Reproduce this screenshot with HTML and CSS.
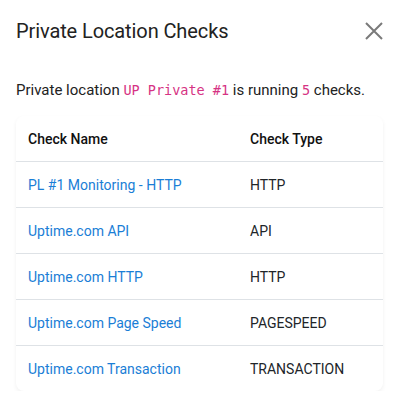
FILE: index.html
```html
<!DOCTYPE html>
<html lang="en">
<head>
  <meta charset="UTF-8" />
  <title>Private Location Checks</title>
  <link rel="stylesheet" href="styles.css">
</head>
<body>
  <div class="modal">
    <div class="modal-header">
      <h2>Private Location Checks</h2>
      <button class="close" aria-label="Close">
        <svg width="18" height="18" viewBox="0 0 18 18">
          <path d="M1 1 L17 17 M17 1 L1 17" stroke="#7a7a7a" stroke-width="2" fill="none"/>
        </svg>
      </button>
    </div>
    <p class="intro">Private location <code>UP Private #1</code> is running <code>5</code> checks.</p>

    <div class="card">
      <table>
        <thead>
          <tr>
            <th>Check Name</th>
            <th>Check Type</th>
          </tr>
        </thead>
        <tbody>
          <tr><td><a href="#">PL #1 Monitoring - HTTP</a></td><td>HTTP</td></tr>
          <tr><td><a href="#">Uptime.com API</a></td><td>API</td></tr>
          <tr><td><a href="#">Uptime.com HTTP</a></td><td>HTTP</td></tr>
          <tr><td><a href="#">Uptime.com Page Speed</a></td><td>PAGESPEED</td></tr>
          <tr><td><a href="#">Uptime.com Transaction</a></td><td>TRANSACTION</td></tr>
        </tbody>
      </table>
    </div>
  </div>
</body>
</html>
```

FILE: styles.css
```css
html, body {
  margin: 0;
  padding: 0;
  background: #fff;
  font-family: 'Roboto', 'Liberation Sans', sans-serif;
  color: #212529;
}

.modal {
  padding: 16px 13px 0 16px;
}

.modal-header {
  display: flex;
  justify-content: space-between;
  align-items: center;
  height: 30px;
}

.modal-header h2 {
  margin: 0;
  font-size: 20px;
  font-weight: 400;
  color: #222;
  letter-spacing: -0.1px;
}

.close {
  background: none;
  border: 0;
  padding: 0;
  width: 18px;
  height: 18px;
  cursor: pointer;
}

.intro {
  margin: 34px 0 16px 0;
  font-size: 15px;
  line-height: 20px;
  color: #222;
}

code {
  font-family: 'DejaVu Sans Mono', monospace;
  font-size: 13.5px;
  color: #d63384;
}

.card {
  background: #fff;
  border-radius: 8px;
  box-shadow: 0 2px 4px rgba(0, 0, 0, 0.06);
  overflow: hidden;
}

table {
  width: 100%;
  border-collapse: collapse;
  font-size: 14px;
}

th, td {
  text-align: left;
  padding: 0 12px;
  height: 45px;
  border-bottom: 1px solid #dee2e6;
}

th {
  font-weight: 500;
  color: #111;
}

th:first-child, td:first-child {
  width: 198px;
}

tbody tr:last-child td {
  border-bottom: 0;
}

a {
  color: #1a7ed6;
  text-decoration: none;
}
```
